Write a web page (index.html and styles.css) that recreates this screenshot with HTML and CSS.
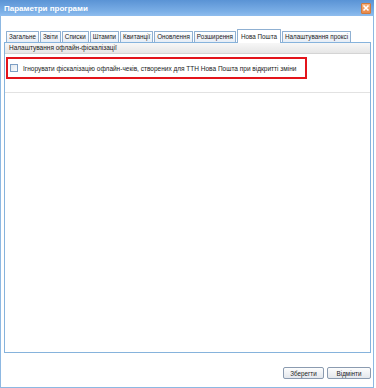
FILE: index.html
```html
<!DOCTYPE html>
<html lang="uk">

<head>
  <meta charset="UTF-8">
  <title>Параметри програми</title>
  <link rel="stylesheet" href="styles.css">
</head>

<body>
  <div class="window">
    <div class="titlebar">
      <span class="title">Параметри програми</span>
      <span class="close">
        <svg width="8" height="8" viewBox="0 0 8 8"><path d="M1.5 1.5 L6.5 6.5 M6.5 1.5 L1.5 6.5" stroke="#fff" stroke-width="1.6"/></svg>
      </span>
    </div>

    <div class="content">
      <div class="tabs">
        <div class="tab">Загальне</div>
        <div class="tab">Звіти</div>
        <div class="tab">Списки</div>
        <div class="tab">Штампи</div>
        <div class="tab">Квитанції</div>
        <div class="tab">Оновлення</div>
        <div class="tab">Розширення</div>
        <div class="tab active">Нова Пошта</div>
        <div class="tab">Налаштування проксі</div>
      </div>

      <div class="panel">
        <div class="section">
          <div class="section-header">Налаштування офлайн-фіскалізації</div>
          <div class="section-body">
            <label class="option">
              <span class="checkbox"></span>
              Ігнорувати фіскалізацію офлайн-чеків, створених для ТТН Нова Пошта при відкритті зміни
            </label>
          </div>
        </div>
      </div>

      <div class="buttons">
        <button>Зберегти</button>
        <button>Відмінти</button>
      </div>
    </div>
  </div>
</body>

</html>
```

FILE: styles.css
```css
* {
  box-sizing: border-box;
  margin: 0;
  padding: 0;
  font-family: "Liberation Sans", Arial, sans-serif;
}

body {
  background: white;
  width: 376px;
  height: 388px;
  overflow: hidden;
}

.window {
  width: 374px;
  height: 388px;
  border: 1px solid #8db8e2;
  border-top: none;
  display: flex;
  flex-direction: column;
}

.titlebar {
  height: 16px;
  margin: 0 -1px;
  background: linear-gradient(to bottom, #5a93d5, #7aaee6 70%, #8fbdee);
  display: flex;
  align-items: center;
  justify-content: space-between;
  padding: 0 3px 0 4px;
}

.title {
  color: white;
  font-size: 8px;
  font-weight: bold;
}

.close {
  width: 10px;
  height: 11px;
  background: linear-gradient(to bottom, #f6b27c, #e9894a);
  border: 1px solid #d07a3e;
  border-radius: 1px;
  display: flex;
  align-items: center;
  justify-content: center;
}

.content {
  flex: 1;
  display: flex;
  flex-direction: column;
  padding: 13px 2px 0 3px;
}

.tabs {
  display: flex;
  align-items: flex-end;
  gap: 1px;
  padding-left: 2px;
  height: 13px;
}

.tab {
  height: 11px;
  padding: 0 2px;
  font-size: 6.3px;
  line-height: 10px;
  color: #222;
  border: 1px solid #8fb0d2;
  border-bottom: none;
  border-radius: 1px 1px 0 0;
  background: linear-gradient(to bottom, #ffffff, #e6edf6);
  white-space: nowrap;
}

.tab.active {
  height: 14px;
  margin-bottom: -1px;
  padding: 0 3px;
  line-height: 13px;
  background: white;
  position: relative;
}

.panel {
  height: 311px;
  border: 1px solid #86b3dc;
  background: white;
}

.section {
  border-bottom: 1px solid #e2e2e2;
  height: 50px;
}

.section-header {
  height: 11px;
  padding-left: 4px;
  font-size: 6.5px;
  line-height: 10px;
  color: #222;
  background: linear-gradient(to bottom, #f7f7f7, #e6e6e6);
  border-bottom: 1px solid #d4d4d4;
}

.section-body {
  padding: 3px 0 0 1px;
}

.option {
  width: 301px;
  height: 22px;
  border: 2px solid #e3141b;
  display: flex;
  align-items: center;
  gap: 5px;
  padding-left: 2px;
  font-size: 6.5px;
  color: #222;
  white-space: nowrap;
}

.checkbox {
  flex-shrink: 0;
  width: 8px;
  height: 8px;
  border: 1px solid #7d9fc4;
  background: linear-gradient(135deg, #e2e8ef, #fbfcfd);
}

.buttons {
  display: flex;
  justify-content: flex-end;
  gap: 3px;
  padding-top: 14px;
}

button {
  height: 12px;
  font-size: 6.3px;
  color: #222;
  border: 1px solid #8b9bb0;
  border-radius: 2px;
  background: linear-gradient(to bottom, #fdfdfd, #e4e7ec);
}

button:first-child {
  width: 41px;
}

button:last-child {
  width: 44px;
}
```
